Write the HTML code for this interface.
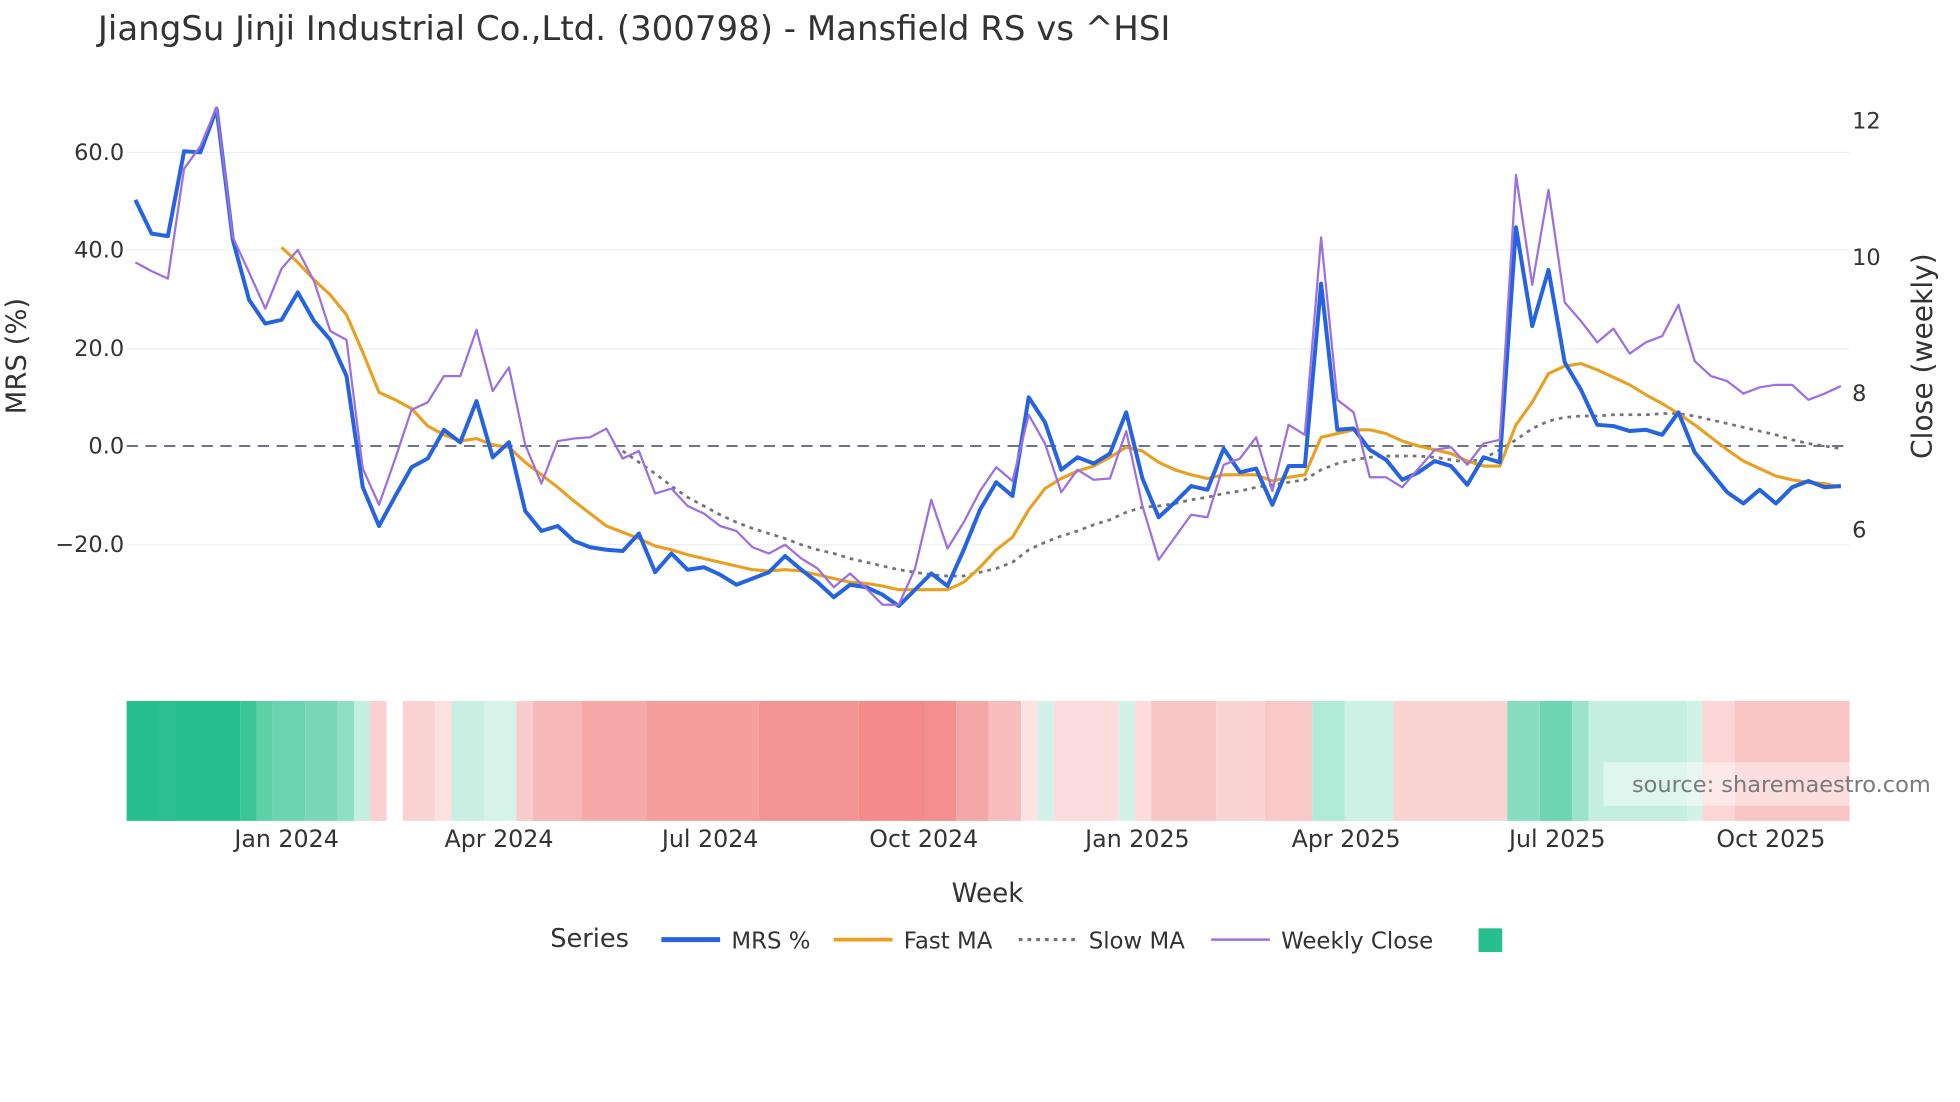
<!DOCTYPE html>
<html><head><meta charset="utf-8"><style>
html,body{margin:0;padding:0;background:#fff;}
svg{display:block;font-family:"DejaVu Sans","Liberation Sans",sans-serif;}
</style></head><body>
<svg width="1960" height="1102" viewBox="0 0 1568 882" xmlns="http://www.w3.org/2000/svg">
<rect width="1568" height="882" fill="#fff"/>
<text x="78" y="32" font-size="27.2" fill="#333">JiangSu Jinji Industrial Co.,Ltd. (300798) - Mansfield RS vs ^HSI</text>
<g stroke="#eceff4" stroke-width="1">
<line x1="101" x2="1480" y1="122" y2="122"/><line x1="101" x2="1480" y1="200" y2="200"/>
<line x1="101" x2="1480" y1="279" y2="279"/><line x1="101" x2="1480" y1="436" y2="436"/>
</g>
<line x1="101" x2="1480" y1="357" y2="357" stroke="#6b7585" stroke-width="1.6" stroke-dasharray="9,6"/>
<g font-size="18" fill="#333" text-anchor="end">
<text x="99" y="128">60.0</text><text x="99" y="206">40.0</text><text x="99" y="285">20.0</text>
<text x="99" y="363">0.0</text><text x="99" y="442">−20.0</text>
</g>
<g font-size="18" fill="#333">
<text x="1482" y="103">12</text><text x="1482" y="212">10</text><text x="1482" y="321">8</text><text x="1482" y="430">6</text>
</g>
<text transform="translate(20,285) rotate(-90)" font-size="22" fill="#333" text-anchor="middle">MRS (%)</text>
<text transform="translate(1546,285) rotate(-90)" font-size="22.5" fill="#333" text-anchor="middle">Close (weekly)</text>
<g>
<rect x="101" y="561" width="91" height="96" fill="#28bf8e"/>
<rect x="127" y="561" width="13" height="96" fill="#2dc191"/>
<rect x="192" y="561" width="13" height="96" fill="#3cc597"/>
<rect x="205" y="561" width="13" height="96" fill="#5dd0a8"/>
<rect x="218" y="561" width="26" height="96" fill="#6bd4b0"/>
<rect x="244" y="561" width="26" height="96" fill="#7ad8b8"/>
<rect x="270" y="561" width="13" height="96" fill="#8de0c4"/>
<rect x="283" y="561" width="13" height="96" fill="#c3eee0"/>
<rect x="296" y="561" width="13" height="96" fill="#fad0d0"/>
<rect x="322" y="561" width="26" height="96" fill="#fbd3d3"/>
<rect x="348" y="561" width="13" height="96" fill="#fde0e0"/>
<rect x="361" y="561" width="26" height="96" fill="#c9efe2"/>
<rect x="387" y="561" width="26" height="96" fill="#d5f3e8"/>
<rect x="413" y="561" width="13" height="96" fill="#f9cccc"/>
<rect x="426" y="561" width="39" height="96" fill="#f6b8b8"/>
<rect x="465" y="561" width="52" height="96" fill="#f5a9a9"/>
<rect x="517" y="561" width="90" height="96" fill="#f49e9e"/>
<rect x="607" y="561" width="80" height="96" fill="#f39494"/>
<rect x="687" y="561" width="53" height="96" fill="#f38b8b"/>
<rect x="740" y="561" width="25" height="96" fill="#f38f8f"/>
<rect x="765" y="561" width="26" height="96" fill="#f4a7a7"/>
<rect x="791" y="561" width="26" height="96" fill="#f7bcbc"/>
<rect x="817" y="561" width="13" height="96" fill="#fde2e2"/>
<rect x="830" y="561" width="13" height="96" fill="#d3f2e7"/>
<rect x="843" y="561" width="52" height="96" fill="#fcdcdc"/>
<rect x="895" y="561" width="13" height="96" fill="#d3f2e7"/>
<rect x="908" y="561" width="13" height="96" fill="#fcdcdc"/>
<rect x="921" y="561" width="52" height="96" fill="#f9c6c6"/>
<rect x="973" y="561" width="39" height="96" fill="#fbd3d3"/>
<rect x="1012" y="561" width="38" height="96" fill="#f9c9c9"/>
<rect x="1050" y="561" width="26" height="96" fill="#b0ebd7"/>
<rect x="1076" y="561" width="39" height="96" fill="#cdf1e4"/>
<rect x="1115" y="561" width="91" height="96" fill="#fbd3d3"/>
<rect x="1206" y="561" width="26" height="96" fill="#88ddc0"/>
<rect x="1232" y="561" width="26" height="96" fill="#6dd5b2"/>
<rect x="1258" y="561" width="13" height="96" fill="#9ae3ca"/>
<rect x="1271" y="561" width="79" height="96" fill="#c3eee0"/>
<rect x="1350" y="561" width="12" height="96" fill="#d3f2e7"/>
<rect x="1362" y="561" width="26" height="96" fill="#fcd6d6"/>
<rect x="1388" y="561" width="92" height="96" fill="#f9c4c4"/>
</g>
<rect x="1283" y="610" width="285" height="35" fill="#fff" fill-opacity="0.45"/>
<text x="1545" y="634" font-size="18" fill="#7a7a7a" text-anchor="end">source: sharemaestro.com</text>
<polyline fill="none" stroke="#737373" stroke-width="2.2" stroke-dasharray="3,4" points="498,361 511,370 524,379 537,389 550,398 563,405 576,412 589,418 602,423 615,427 628,431 641,436 654,440 667,443 680,447 693,450 706,453 719,456 732,458 745,460 758,461 771,461 784,458 797,455 810,450 823,440 836,434 849,429 862,425 875,420 888,416 901,410 914,406 927,405 940,403 953,400 966,398 979,395 992,393 1005,390 1018,388 1031,386 1044,384 1057,376 1070,371 1083,368 1096,366 1109,365 1122,365 1135,365 1148,366 1161,368 1174,370 1187,367 1200,360 1213,352 1226,343 1239,337 1252,334 1265,333 1278,333 1291,332 1304,332 1317,332 1330,331 1343,331 1356,333 1369,336 1382,339 1395,342 1408,345 1421,348 1434,352 1447,355 1460,357 1473,359"/>
<polyline fill="none" stroke="#e8a020" stroke-width="2.5" points="225,198 238,210 251,224 264,236 277,252 290,282 303,314 316,320 329,327 342,341 355,348 368,353 381,351 394,356 407,358 420,370 433,380 446,390 459,401 472,411 485,421 498,426 511,431 524,437 537,440 550,444 563,447 576,450 589,453 602,456 615,457 628,456 641,457 654,460 667,463 680,466 693,467 706,469 719,472 732,472 745,472 758,472 771,466 784,454 797,440 810,430 823,408 836,391 849,383 862,377 875,373 888,366 901,358 914,361 927,370 940,376 953,380 966,383 979,380 992,380 1005,380 1018,385 1031,382 1044,380 1057,350 1070,347 1083,344 1096,344 1109,347 1122,353 1135,357 1148,360 1161,363 1174,369 1187,373 1200,373 1213,340 1226,322 1239,299 1252,293 1265,291 1278,296 1291,302 1304,308 1317,316 1330,323 1343,331 1356,340 1369,350 1382,360 1395,369 1408,375 1421,381 1434,384 1447,386 1460,387 1473,390"/>
<polyline fill="none" stroke="#2563e0" stroke-width="3.2" stroke-linejoin="round" points="108,160 121,187 134,189 147,121 160,122 173,87 186,192 199,240 212,259 225,256 238,234 251,257 264,272 277,301 290,390 303,421 316,397 329,374 342,367 355,344 368,354 381,321 394,366 407,354 420,409 433,425 446,421 459,433 472,438 485,440 498,441 511,427 524,458 537,443 550,456 563,454 576,460 589,468 602,463 615,458 628,445 641,456 654,466 667,478 680,468 693,470 706,476 719,485 732,472 745,459 758,469 771,440 784,408 797,386 810,397 823,318 836,338 849,376 862,366 875,371 888,363 901,330 914,383 927,414 940,402 953,389 966,392 979,359 992,378 1005,375 1018,404 1031,373 1044,373 1057,227 1070,344 1083,343 1096,360 1109,368 1122,384 1135,378 1148,369 1161,373 1174,388 1187,366 1200,370 1213,182 1226,261 1239,216 1252,290 1265,312 1278,340 1291,341 1304,345 1317,344 1330,348 1343,330 1356,362 1369,378 1382,394 1395,403 1408,392 1421,403 1434,390 1447,385 1460,390 1473,389"/>
<polyline fill="none" stroke="#9d6fe0" stroke-width="1.8" stroke-linejoin="round" points="108,210 121,217 134,223 147,135 160,117 173,86 186,190 199,218 212,247 225,215 238,200 251,225 264,265 277,272 290,375 303,404 316,367 329,328 342,322 355,301 368,301 381,264 394,313 407,294 420,356 433,387 446,353 459,351 472,350 485,343 498,367 511,361 524,395 537,391 550,405 563,411 576,421 589,425 602,438 615,443 628,436 641,447 654,455 667,470 680,459 693,471 706,484 719,484 732,455 745,400 758,439 771,418 784,393 797,374 810,385 823,332 836,355 849,394 862,376 875,384 888,383 901,345 914,405 927,448 940,430 953,412 966,414 979,372 992,367 1005,350 1018,393 1031,340 1044,348 1057,190 1070,320 1083,330 1096,382 1109,382 1122,390 1135,375 1148,360 1161,358 1174,372 1187,355 1200,352 1213,140 1226,228 1239,152 1252,242 1265,257 1278,274 1291,263 1304,283 1317,274 1330,269 1343,244 1356,289 1369,301 1382,305 1395,315 1408,310 1421,308 1434,308 1447,320 1460,315 1473,309"/>
<g font-size="19" fill="#333" text-anchor="middle">
<text x="229" y="678">Jan 2024</text><text x="399" y="678">Apr 2024</text><text x="568" y="678">Jul 2024</text><text x="739" y="678">Oct 2024</text>
<text x="910" y="678">Jan 2025</text><text x="1077" y="678">Apr 2025</text><text x="1246" y="678">Jul 2025</text><text x="1417" y="678">Oct 2025</text>
</g>
<text x="790" y="722" font-size="21" fill="#333" text-anchor="middle">Week</text>
<text x="440" y="758" font-size="20.5" fill="#333">Series</text>
<line x1="529" x2="576" y1="752" y2="752" stroke="#2563e0" stroke-width="4"/>
<text x="585" y="759" font-size="18.3" fill="#333">MRS %</text>
<line x1="667" x2="714" y1="752" y2="752" stroke="#e8a020" stroke-width="3"/>
<text x="723" y="759" font-size="18.3" fill="#333">Fast MA</text>
<line x1="815" x2="862" y1="752" y2="752" stroke="#737373" stroke-width="2.5" stroke-dasharray="3,4"/>
<text x="871" y="759" font-size="18.3" fill="#333">Slow MA</text>
<line x1="969" x2="1016" y1="752" y2="752" stroke="#9d6fe0" stroke-width="2"/>
<text x="1025" y="759" font-size="18.3" fill="#333">Weekly Close</text>
<rect x="1183" y="743" width="19" height="19" fill="#28bf8e"/>
</svg>
</body></html>
